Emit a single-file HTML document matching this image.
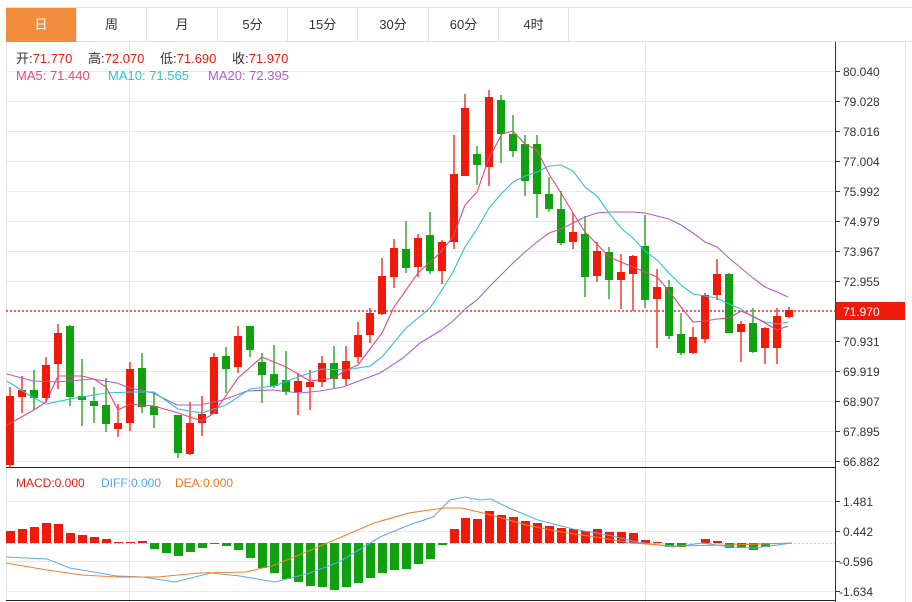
<!DOCTYPE html>
<html><head><meta charset="utf-8"><style>
html,body{margin:0;padding:0;background:#fff;}
body{width:912px;height:602px;overflow:hidden;position:relative;font-family:"Liberation Sans","Noto Sans CJK SC",sans-serif;}
.tabs{position:absolute;left:6px;top:7px;height:35px;width:906px;border-top:1px solid #dde3e8;border-bottom:1px solid #dde3e8;box-sizing:border-box;}
.tab{position:absolute;top:0;height:34px;line-height:34px;text-align:center;font-size:13px;color:#333;border-right:1px solid #dde3e8;box-sizing:border-box;}
.tab.on{background:#f28c3c;color:#fff;}
</style></head><body>
<div class="tabs">
<div class="tab on" style="left:0;width:71px">日</div>
<div class="tab" style="left:71px;width:70px">周</div>
<div class="tab" style="left:141px;width:71px">月</div>
<div class="tab" style="left:212px;width:70px">5分</div>
<div class="tab" style="left:282px;width:70px">15分</div>
<div class="tab" style="left:352px;width:71px">30分</div>
<div class="tab" style="left:423px;width:70px">60分</div>
<div class="tab" style="left:493px;width:70px">4时</div>
</div>
<svg width="912" height="602" style="position:absolute;left:0;top:0" xmlns="http://www.w3.org/2000/svg" font-family="Liberation Sans, Noto Sans CJK SC, sans-serif">
<g stroke="#e3e8ec" stroke-width="1">
<line x1="6.5" y1="42" x2="6.5" y2="602"/>
<line x1="129.5" y1="42" x2="129.5" y2="602"/>
<line x1="645.5" y1="42" x2="645.5" y2="602"/>
<line x1="905.5" y1="42" x2="905.5" y2="602"/>
<line x1="6" y1="71.5" x2="835" y2="71.5"/><line x1="6" y1="101.5" x2="835" y2="101.5"/><line x1="6" y1="131.5" x2="835" y2="131.5"/><line x1="6" y1="161.5" x2="835" y2="161.5"/><line x1="6" y1="191.5" x2="835" y2="191.5"/><line x1="6" y1="221.5" x2="835" y2="221.5"/><line x1="6" y1="251.5" x2="835" y2="251.5"/><line x1="6" y1="281.5" x2="835" y2="281.5"/><line x1="6" y1="341.5" x2="835" y2="341.5"/><line x1="6" y1="371.5" x2="835" y2="371.5"/><line x1="6" y1="401.5" x2="835" y2="401.5"/><line x1="6" y1="431.5" x2="835" y2="431.5"/><line x1="6" y1="461.5" x2="835" y2="461.5"/>
<line x1="6" y1="501.5" x2="835" y2="501.5"/><line x1="6" y1="531.5" x2="835" y2="531.5"/><line x1="6" y1="561.5" x2="835" y2="561.5"/><line x1="6" y1="591.5" x2="835" y2="591.5"/>
</g>
<line x1="6" y1="467.5" x2="835" y2="467.5" stroke="#222"/>
<line x1="6" y1="600.5" x2="835" y2="600.5" stroke="#222"/>
<line x1="835.5" y1="42" x2="835.5" y2="602" stroke="#333"/>
<line x1="6" y1="311" x2="835" y2="311" stroke="#ff3030" stroke-width="2" stroke-dasharray="2,2" opacity="0.8"/>
<line x1="6" y1="543.5" x2="835" y2="543.5" stroke="#9dd" stroke-dasharray="2,2"/>
<g stroke="#333"><line x1="835" y1="71.5" x2="840" y2="71.5"/><line x1="835" y1="101.5" x2="840" y2="101.5"/><line x1="835" y1="131.5" x2="840" y2="131.5"/><line x1="835" y1="161.5" x2="840" y2="161.5"/><line x1="835" y1="191.5" x2="840" y2="191.5"/><line x1="835" y1="221.5" x2="840" y2="221.5"/><line x1="835" y1="251.5" x2="840" y2="251.5"/><line x1="835" y1="281.5" x2="840" y2="281.5"/><line x1="835" y1="341.5" x2="840" y2="341.5"/><line x1="835" y1="371.5" x2="840" y2="371.5"/><line x1="835" y1="401.5" x2="840" y2="401.5"/><line x1="835" y1="431.5" x2="840" y2="431.5"/><line x1="835" y1="461.5" x2="840" y2="461.5"/><line x1="835" y1="501.5" x2="840" y2="501.5"/><line x1="835" y1="531.5" x2="840" y2="531.5"/><line x1="835" y1="561.5" x2="840" y2="561.5"/><line x1="835" y1="591.5" x2="840" y2="591.5"/></g>
<g font-size="12" fill="#333">
<text x="843" y="76">80.040</text><text x="843" y="106">79.028</text><text x="843" y="136">78.016</text><text x="843" y="166">77.004</text><text x="843" y="196">75.992</text><text x="843" y="226">74.979</text><text x="843" y="256">73.967</text><text x="843" y="286">72.955</text><text x="843" y="346">70.931</text><text x="843" y="376">69.919</text><text x="843" y="406">68.907</text><text x="843" y="436">67.895</text><text x="843" y="466">66.882</text>
<text x="843" y="506">1.481</text><text x="843" y="536">0.442</text><text x="839" y="566">-0.596</text><text x="839" y="596">-1.634</text>
</g>
<rect x="836" y="302" width="69" height="18" fill="#f01a0a"/>
<text x="843" y="316" font-size="12" fill="#fff">71.970</text>
<g font-size="13">
<text x="16" y="63" fill="#333">开:<tspan fill="#f01a0a">71.770</tspan></text>
<text x="88" y="63" fill="#333">高:<tspan fill="#f01a0a">72.070</tspan></text>
<text x="160" y="63" fill="#333">低:<tspan fill="#f01a0a">71.690</tspan></text>
<text x="232" y="63" fill="#333">收:<tspan fill="#f01a0a">71.970</tspan></text>
<text x="16" y="80" fill="#e8467c">MA5: 71.440</text>
<text x="108" y="80" fill="#30c0d8">MA10: 71.565</text>
<text x="208" y="80" fill="#b05cd0">MA20: 72.395</text>
</g>
<g font-size="12">
<text x="16" y="487" fill="#f01a0a">MACD:0.000</text>
<text x="101" y="487" fill="#4aa8f0">DIFF:0.000</text>
<text x="175" y="487" fill="#f07820">DEA:0.000</text>
</g>
<g stroke-width="1.3">
<g stroke="#f01a0a">
<line x1="10" y1="387" x2="10" y2="468"/><line x1="22" y1="376" x2="22" y2="413"/><line x1="46" y1="357" x2="46" y2="402"/><line x1="58" y1="324" x2="58" y2="389"/><line x1="118" y1="404" x2="118" y2="437"/><line x1="130" y1="362" x2="130" y2="431"/><line x1="190" y1="402" x2="190" y2="455"/><line x1="202" y1="396" x2="202" y2="436"/><line x1="214" y1="353" x2="214" y2="414"/><line x1="238" y1="326" x2="238" y2="373"/><line x1="298" y1="373" x2="298" y2="415"/><line x1="310" y1="370" x2="310" y2="410"/><line x1="322" y1="356" x2="322" y2="387"/><line x1="346" y1="346" x2="346" y2="385"/><line x1="358" y1="322" x2="358" y2="363"/><line x1="370" y1="308" x2="370" y2="343"/><line x1="382" y1="258" x2="382" y2="315"/><line x1="394" y1="239" x2="394" y2="288"/><line x1="418" y1="234" x2="418" y2="277"/><line x1="442" y1="240" x2="442" y2="284"/><line x1="454" y1="135" x2="454" y2="249"/><line x1="465" y1="94" x2="465" y2="176"/><line x1="489" y1="90" x2="489" y2="186"/><line x1="573" y1="213" x2="573" y2="249"/><line x1="597" y1="242" x2="597" y2="282"/><line x1="621" y1="254" x2="621" y2="309"/><line x1="633" y1="255" x2="633" y2="311"/><line x1="657" y1="269" x2="657" y2="348"/><line x1="693" y1="327" x2="693" y2="354"/><line x1="705" y1="293" x2="705" y2="343"/><line x1="717" y1="259" x2="717" y2="300"/><line x1="741" y1="321" x2="741" y2="362"/><line x1="765" y1="327" x2="765" y2="364"/><line x1="777" y1="308" x2="777" y2="364"/><line x1="789" y1="307" x2="789" y2="318"/>
</g>
<g stroke="#10a010">
<line x1="34" y1="370" x2="34" y2="410"/><line x1="70" y1="325" x2="70" y2="406"/><line x1="82" y1="359" x2="82" y2="426"/><line x1="94" y1="387" x2="94" y2="423"/><line x1="106" y1="378" x2="106" y2="432"/><line x1="142" y1="353" x2="142" y2="413"/><line x1="154" y1="393" x2="154" y2="428"/><line x1="178" y1="415" x2="178" y2="458"/><line x1="226" y1="347" x2="226" y2="393"/><line x1="250" y1="326" x2="250" y2="357"/><line x1="262" y1="353" x2="262" y2="403"/><line x1="274" y1="345" x2="274" y2="388"/><line x1="286" y1="351" x2="286" y2="395"/><line x1="334" y1="346" x2="334" y2="388"/><line x1="406" y1="221" x2="406" y2="273"/><line x1="430" y1="212" x2="430" y2="274"/><line x1="477" y1="146" x2="477" y2="185"/><line x1="501" y1="95" x2="501" y2="163"/><line x1="513" y1="115" x2="513" y2="157"/><line x1="525" y1="135" x2="525" y2="196"/><line x1="537" y1="135" x2="537" y2="218"/><line x1="549" y1="177" x2="549" y2="212"/><line x1="561" y1="191" x2="561" y2="245"/><line x1="585" y1="216" x2="585" y2="297"/><line x1="609" y1="247" x2="609" y2="299"/><line x1="645" y1="215" x2="645" y2="308"/><line x1="669" y1="280" x2="669" y2="339"/><line x1="681" y1="313" x2="681" y2="355"/><line x1="729" y1="273" x2="729" y2="333"/><line x1="753" y1="308" x2="753" y2="353"/>
</g>
</g>
<g fill="#f01a0a">
<rect x="6" y="396" width="8" height="69"/><rect x="18" y="390" width="8" height="7"/><rect x="42" y="365" width="8" height="33"/><rect x="54" y="333" width="8" height="31"/><rect x="114" y="423" width="8" height="6"/><rect x="126" y="369" width="8" height="54"/><rect x="186" y="423" width="8" height="31"/><rect x="198" y="414" width="8" height="9"/><rect x="210" y="357" width="8" height="57"/><rect x="234" y="336" width="8" height="31"/><rect x="294" y="381" width="8" height="11"/><rect x="306" y="382" width="8" height="5"/><rect x="318" y="363" width="8" height="19"/><rect x="342" y="361" width="8" height="18"/><rect x="354" y="335" width="8" height="22"/><rect x="366" y="313" width="8" height="22"/><rect x="378" y="276" width="8" height="38"/><rect x="390" y="248" width="8" height="29"/><rect x="414" y="238" width="8" height="29"/><rect x="438" y="242" width="8" height="29"/><rect x="450" y="174" width="8" height="68"/><rect x="461" y="108" width="8" height="68"/><rect x="485" y="97" width="8" height="70"/><rect x="569" y="232" width="8" height="10"/><rect x="593" y="251" width="8" height="25"/><rect x="617" y="272" width="8" height="8"/><rect x="629" y="256" width="8" height="18"/><rect x="653" y="287" width="8" height="12"/><rect x="689" y="337" width="8" height="16"/><rect x="701" y="295" width="8" height="44"/><rect x="713" y="274" width="8" height="21"/><rect x="737" y="324" width="8" height="8"/><rect x="761" y="328" width="8" height="20"/><rect x="773" y="316" width="8" height="32"/><rect x="785" y="310" width="8" height="7"/>
</g>
<g fill="#10a010">
<rect x="30" y="390" width="8" height="8"/><rect x="66" y="326" width="8" height="71"/><rect x="78" y="396" width="8" height="4"/><rect x="90" y="401" width="8" height="5"/><rect x="102" y="405" width="8" height="19"/><rect x="138" y="368" width="8" height="39"/><rect x="150" y="406" width="8" height="9"/><rect x="174" y="415" width="8" height="38"/><rect x="222" y="356" width="8" height="13"/><rect x="246" y="326" width="8" height="24"/><rect x="258" y="362" width="8" height="13"/><rect x="270" y="374" width="8" height="12"/><rect x="282" y="380" width="8" height="12"/><rect x="330" y="363" width="8" height="16"/><rect x="402" y="249" width="8" height="19"/><rect x="426" y="235" width="8" height="36"/><rect x="473" y="154" width="8" height="11"/><rect x="497" y="100" width="8" height="34"/><rect x="509" y="134" width="8" height="17"/><rect x="521" y="144" width="8" height="37"/><rect x="533" y="144" width="8" height="50"/><rect x="545" y="194" width="8" height="15"/><rect x="557" y="209" width="8" height="34"/><rect x="581" y="234" width="8" height="43"/><rect x="605" y="252" width="8" height="28"/><rect x="641" y="246" width="8" height="54"/><rect x="665" y="287" width="8" height="49"/><rect x="677" y="334" width="8" height="19"/><rect x="725" y="274" width="8" height="59"/><rect x="749" y="323" width="8" height="29"/>
</g>
<g fill="none" stroke-width="1.1">
<polyline stroke="#b05cd0" points="7,374 33,381 57,382 93,379 117,383 130,388 153,393 177,405 200,405 223,400 247,391 273,390 300,393 320,391 343,387 380,373 403,358 420,343 440,331 453,321 465,309 477,300 489,287 502,274 513,263 525,252 537,242 549,233 561,229 573,223 585,217 597,213 609,212 633,212 645,213 657,216 669,219 681,225 693,233 705,242 717,247 729,258 741,268 753,278 765,287 777,292 788,297"/>
<polyline stroke="#30c0d8" points="7,381 34,398 46,404 70,399 106,393 130,392 154,392 178,409 202,413 226,405 250,389 274,386 298,377 322,369 346,370 370,366 382,357 406,328 430,308 440,293 453,272 465,247 477,229 489,208 502,193 513,182 525,176 537,172 549,166 561,165 573,171 585,187 597,196 609,213 621,228 633,238 645,251 657,260 669,273 681,285 693,294 705,296 717,298 729,304 741,309 753,317 765,322 777,324 788,322"/>
<polyline stroke="#e8467c" points="7,425 34,410 46,402 58,376 82,376 94,379 106,387 118,410 130,404 154,406 178,413 202,421 214,413 238,378 262,357 286,367 310,381 334,378 346,370 358,365 382,333 394,307 418,273 440,253 453,237 465,205 477,192 489,158 502,134 513,131 525,144 537,150 549,174 561,193 573,213 585,232 597,244 609,257 621,262 633,267 645,272 657,277 669,291 681,307 693,322 705,321 717,319 729,318 741,311 753,316 765,323 777,330 788,326"/>
</g>
<g fill="#f01a0a">
<rect x="6" y="531" width="9" height="12"/><rect x="18" y="529" width="9" height="14"/><rect x="30" y="527" width="9" height="16"/><rect x="42" y="523" width="9" height="20"/><rect x="54" y="524" width="9" height="19"/><rect x="66" y="533" width="9" height="10"/><rect x="78" y="535" width="9" height="8"/><rect x="90" y="537" width="9" height="6"/><rect x="102" y="539" width="9" height="4"/><rect x="114" y="542" width="9" height="1"/><rect x="126" y="542" width="9" height="1"/><rect x="138" y="541" width="9" height="2"/>
<rect x="450" y="529" width="9" height="14"/><rect x="461" y="518" width="9" height="25"/><rect x="473" y="519" width="9" height="24"/><rect x="485" y="511" width="9" height="32"/><rect x="497" y="515" width="9" height="28"/><rect x="509" y="517" width="9" height="26"/><rect x="521" y="521" width="9" height="22"/><rect x="533" y="523" width="9" height="20"/><rect x="545" y="526" width="9" height="17"/><rect x="557" y="528" width="9" height="15"/><rect x="569" y="529" width="9" height="14"/><rect x="581" y="531" width="9" height="12"/><rect x="593" y="529" width="9" height="14"/><rect x="605" y="532" width="9" height="11"/><rect x="617" y="532" width="9" height="11"/><rect x="629" y="533" width="9" height="10"/><rect x="641" y="540" width="9" height="3"/><rect x="653" y="542" width="9" height="1"/><rect x="701" y="539" width="9" height="4"/><rect x="713" y="541" width="9" height="2"/>
</g>
<g fill="#10a010">
<rect x="150" y="543" width="9" height="6"/><rect x="162" y="543" width="9" height="10"/><rect x="174" y="543" width="9" height="13"/><rect x="186" y="543" width="9" height="9"/><rect x="198" y="543" width="9" height="5"/><rect x="210" y="543" width="9" height="1"/><rect x="222" y="543" width="9" height="3"/><rect x="234" y="543" width="9" height="7"/><rect x="246" y="543" width="9" height="15"/><rect x="258" y="543" width="9" height="25"/><rect x="270" y="543" width="9" height="30"/><rect x="282" y="543" width="9" height="36"/><rect x="294" y="543" width="9" height="39"/><rect x="306" y="543" width="9" height="43"/><rect x="318" y="543" width="9" height="44"/><rect x="330" y="543" width="9" height="47"/><rect x="342" y="543" width="9" height="44"/><rect x="354" y="543" width="9" height="40"/><rect x="366" y="543" width="9" height="35"/><rect x="378" y="543" width="9" height="30"/><rect x="390" y="543" width="9" height="27"/><rect x="402" y="543" width="9" height="26"/><rect x="414" y="543" width="9" height="21"/><rect x="426" y="543" width="9" height="16"/><rect x="438" y="543" width="9" height="2"/>
<rect x="665" y="543" width="9" height="4"/><rect x="677" y="543" width="9" height="4"/><rect x="725" y="543" width="9" height="5"/><rect x="737" y="543" width="9" height="5"/><rect x="749" y="543" width="9" height="7"/><rect x="761" y="543" width="9" height="4"/>
</g>
<g fill="none" stroke-width="1.1">
<polyline stroke="#5aaaf0" points="6,557 47,559 70,568 117,576 143,577 175,582 211,573 240,576 275,582 310,573 339,562 380,537 409,525 433,517 450,500 465,497 480,500 491,499 509,508 538,520 573,529 608,535 637,542 673,547 702,543 731,547 754,548 792,543"/>
<polyline stroke="#f08030" points="6,563 47,570 82,575 117,577 158,577 199,573 246,572 275,565 304,553 339,538 374,523 409,513 444,508 462,508 491,515 526,525 561,532 596,537 632,543 673,546 731,545 792,543"/>
</g>
</svg>
</body></html>
